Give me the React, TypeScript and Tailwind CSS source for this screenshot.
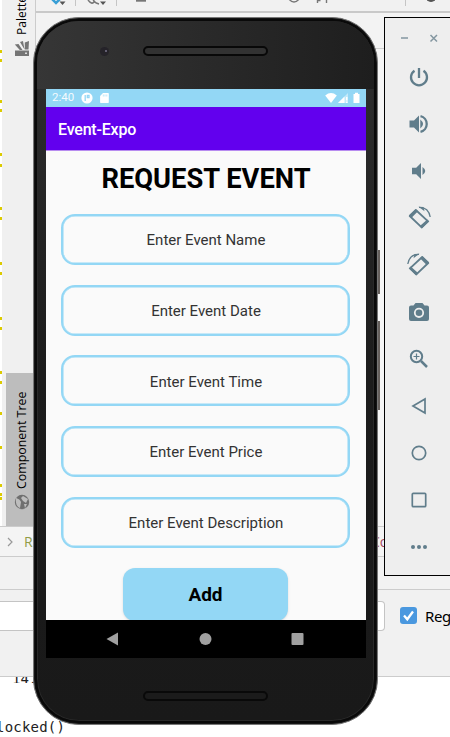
import React from "react";

const fields = [
  "Enter Event Name",
  "Enter Event Date",
  "Enter Event Time",
  "Enter Event Price",
  "Enter Event Description",
];

// Changed-line marks in the editor gutter.
const marks = [50, 59, 100, 109, 153, 164, 207, 217, 262, 272, 317, 327, 371, 381, 412, 446, 484, 493, 497];

function StatusBar() {
  return (
    <div className="flex h-[18px] items-center justify-between bg-[#93d7f5] pl-[6px] pr-[5px] text-white">
      <div className="flex items-center">
        <span className="w-[29px] text-[11.500px] leading-none opacity-90">2:40</span>
        <svg width="12" height="12" viewBox="0 0 12 12">
          <circle cx="6" cy="6" r="5.6" fill="#fff" />
          <path d="M4.200 3v6M6.300 3.500H8v2.200H6.300z" stroke="#93d7f5" strokeWidth="1.300" fill="none" />
        </svg>
        <svg className="ml-[7px]" width="9" height="12" viewBox="0 0 9 12">
          <path d="M3 1h5.200q.6 0 .6.7v8.600q0 .7-.7.7H.8q-.7 0-.7-.7V4z" fill="#fff" />
          <path d="M3.300 2.500v2M5 2.500v2M6.800 2.500v2" stroke="#93d7f5" strokeWidth=".6" />
        </svg>
      </div>
      <svg width="36" height="12" viewBox="0 0 36 12" fill="#fff">
        <path d="M.2 3.500Q6-1.300 11.800 3.500L6 11z" />
        <path d="M13 11 23 1v10z" opacity=".45" />
        <path d="M13 11 19.500 4.500V11zM21 5h1.500v3.500H21zM21 9.500h1.500V11H21z" />
        <path d="M28.500 2H30V.8h3V2h1.500v9h-6z" />
      </svg>
    </div>
  );
}

function Speaker({ dark }: { dark?: boolean }) {
  return (
    <div
      className={
        dark
          ? "h-[10px] w-[125px] rounded-full border-2 border-[#090909] bg-[#1b1b1b]"
          : "h-[10px] w-[125px] rounded-full border-2 border-[#080808] bg-[#323232]"
      }
    />
  );
}

function Phone() {
  return (
    <>
      <div className="absolute left-[377px] top-[250px] h-[44px] w-[3px] bg-[#66605d]" />
      <div className="absolute left-[377px] top-[321px] h-[89px] w-[3px] bg-[#66605d]" />
      <div className="absolute left-[33px] top-[17px] h-[708px] w-[345px] rounded-[46px] border border-[#777] bg-[#151515] p-px">
        <div className="flex h-full flex-col overflow-hidden rounded-[44px] border-2 border-[#090909] bg-linear-to-b from-[#303030] via-[#1c1c1c] to-[#191919] pl-[9px] pr-[8px] shadow-[inset_0_0_0_1px_#292929]">
          <div className="relative -ml-[9px] -mr-[8px] flex h-[68px] shrink-0 justify-center bg-linear-to-r from-[#363636] to-[#1e1e1e] pr-px pt-[25px]">
            <div className="absolute left-[63px] top-[26px] size-[9px] rounded-full bg-[#252329]">
              <div className="ml-[5px] mt-[3px] size-[2px] rounded-full bg-[#77738a]" />
            </div>
            <Speaker />
          </div>
          <div className="flex h-[569px] w-[320px] shrink-0 flex-col bg-[#fafafa] font-[Roboto,sans-serif]">
            <StatusBar />
            <div className="flex h-[44px] items-center border-b border-[#b88cf0] bg-[#6200ee] pl-[12px] pt-[2px] text-[16px] font-medium tracking-[-0.200px] text-white">
              Event-Expo
            </div>
            <div className="flex h-[469px] flex-col items-center overflow-hidden pr-[2px]">
              <h1 className="mt-[9px] h-[37px] pl-[2px] text-[27.300px] font-bold leading-[38px] text-black">REQUEST EVENT</h1>
              <div className="mt-[17px] flex flex-col gap-[19.700px]">
                {fields.map((f) => (
                  <div
                    key={f}
                    className="flex h-[51px] w-[289px] items-center justify-center rounded-[14px] border-2 border-[#93d7f5] pl-[2px] pt-[2px] text-[15px] text-[#333] shadow-[inset_0_0_0_0.500px_#93d7f5]"
                  >
                    {f}
                  </div>
                ))}
              </div>
              <div className="mt-[20px] flex h-[53px] w-[165px] shrink-0 items-center justify-center rounded-[12px] bg-[#93d7f5] pl-px pt-[2px] text-[19px] font-bold text-black shadow-sm">
                Add
              </div>
            </div>
            <div className="flex h-[38px] items-center justify-center bg-black">
              <svg width="200" height="16" viewBox="0 0 200 16" fill="#a0a0a0">
                <path d="M.5 8 12 1.500v13z" />
                <circle cx="99.500" cy="8" r="6" />
                <rect x="185.500" y="2" width="12" height="12" rx="1" />
              </svg>
            </div>
          </div>
          <div className="flex justify-center pr-[2px] pt-[33px]">
            <Speaker dark />
          </div>
        </div>
      </div>
    </>
  );
}

function Rotate({ flip }: { flip?: boolean }) {
  return (
    <g transform={flip ? "matrix(-1 0 0 1 24 0)" : undefined}>
      <path d="M8.800 4 20.800 15.200 14.700 21.300 2.700 10z" fill="none" stroke="#607d8b" strokeWidth="1.800" strokeLinejoin="round" />
      <path d="M8.800 3.200 11 5.300 4.800 11.600 1.800 9.500zM20.300 13.500l2 1.900-7.500 7-2.200-2.200z" fill="#607d8b" />
      <path d="M12 1.300Q21.500 1 23.200 11" fill="none" stroke="#607d8b" strokeWidth="1.300" />
      <path d="m11.500.7 5 .3 1 4.200z" fill="#607d8b" />
    </g>
  );
}

const tools: React.ReactNode[] = [
  <g fill="none" stroke="#607d8b" strokeWidth="2.300">
    <path d="M12 3v10M7.500 5.700a8 8 0 1 0 9 0" />
  </g>,
  <g fill="#607d8b">
    <path d="M2.500 8.500H7L12 3.500v17l-5-5H2.500zM13.300 7.500q5.500 4.500 0 9z" />
    <path d="M13.500 4.200a8 8 0 0 1 0 15.600" fill="none" stroke="#607d8b" strokeWidth="2.300" />
  </g>,
  <path d="M5 8.700h4.200L14 4v16l-4.800-4.700H5zM15.500 8q5.500 4 0 8z" fill="#607d8b" />,
  <Rotate />,
  <Rotate flip />,
  <g>
    <path d="M8.500 3h7l2 2.500H20a2 2 0 0 1 2 2V19a2 2 0 0 1-2 2H4a2 2 0 0 1-2-2V7.500a2 2 0 0 1 2-2h2.500z" fill="#607d8b" />
    <circle cx="12" cy="12.800" r="4.200" fill="none" stroke="#eee" strokeWidth="1.800" />
  </g>,
  <g fill="none" stroke="#607d8b">
    <circle cx="9.500" cy="9.500" r="5.700" strokeWidth="2" />
    <path d="m14 14 6 6" strokeWidth="2.500" />
    <path d="M9.500 6.500v6M6.500 9.500h6" strokeWidth="1.200" />
  </g>,
  <path d="M6 12 18 5v14z" fill="none" stroke="#607d8b" strokeWidth="1.700" />,
  <circle cx="12" cy="12" r="6.700" fill="none" stroke="#607d8b" strokeWidth="1.700" />,
  <rect x="5.300" y="5.300" width="13.400" height="13.400" rx="1" fill="none" stroke="#607d8b" strokeWidth="1.700" />,
  <g fill="#607d8b">
    <circle cx="6" cy="12" r="2" />
    <circle cx="12" cy="12" r="2" />
    <circle cx="18" cy="12" r="2" />
  </g>,
];

function EmulatorPanel() {
  return (
    <div className="absolute left-[384px] top-[17px] h-[559px] w-[80px] border border-black bg-[#eee]">
      <svg className="ml-[14px] mt-[14px]" width="40" height="12" viewBox="0 0 40 12" stroke="#8396a0" fill="none">
        <path d="M2 6h7" strokeWidth="1.500" />
        <path d="m31.500 3 6.500 6.500m0-6.500-6.500 6.500" strokeWidth="1.500" />
      </svg>
      <div className="ml-[22px] mt-[21px] flex flex-col gap-[23px]">
        {tools.map((t, i) => (
          <svg key={i} width="24" height="24" viewBox="0 0 24 24">
            {t}
          </svg>
        ))}
      </div>
    </div>
  );
}

function Ide() {
  return (
    <div className="flex h-full w-full flex-col bg-white font-['Open_Sans','Noto_Sans',sans-serif] text-[13px] text-[#222]">
      <div className="flex h-[526px] shrink-0">
        <svg className="shrink-0" width="2" height="526" viewBox="0 0 2 526">
          {marks.map((y) => (
            <rect key={y} x="0" y={y} width="2" height="3" fill="#dccb00" />
          ))}
        </svg>
        <div className="flex w-[34px] shrink-0 flex-col items-end border-r border-[#ccc] bg-[#f0f0f0]">
          <div className="flex h-[373px] w-[29px] flex-col items-center pl-[3px]">
            <div className="flex h-[35px] items-end">
              <span className="h-[35px] rotate-180 whitespace-nowrap text-[12px] leading-[18px] text-black [writing-mode:vertical-rl]">
                Palette
              </span>
            </div>
            <svg className="mt-[5px]" width="16" height="17" viewBox="0 0 16 17" fill="#757575">
              <path d="M1 10.500h14V16H1zM.8 4.500 4.500 4l4 6H5.800zM6 2l3-1 1.500 8.500zM10.800 9.500V2.500L15 1l-.5 8.500z" />
              <rect x="11" y="12.500" width="2" height="1.500" fill="#ddd" />
            </svg>
          </div>
          <div className="flex h-[153px] w-[29px] flex-col items-center bg-[#bdbdbd] pl-[3px] pt-[17px]">
            <span className="h-[99px] rotate-180 whitespace-nowrap text-[12.400px] leading-[18px] text-black [writing-mode:vertical-rl]">
              Component Tree
            </span>
            <svg className="mt-[5px]" width="16" height="16" viewBox="0 0 16 16">
              <circle cx="8" cy="8" r="7.200" fill="#6f6f6f" />
              <path d="M2 4q4 1 5 4l-1 6Q1 12 2 4M9 2l5 3-2 4-3-2-2-3zM10 10h3l-2 4z" fill="#bdbdbd" />
            </svg>
          </div>
        </div>
        <div className="flex flex-1 flex-col bg-[#f5f5f5]">
          <div className="h-[13px] border-b-2 border-[#c9c9c9] bg-[#f1f1f1]">
            <svg width="414" height="9" viewBox="0 0 414 9" fill="none">
              <path d="m14-3 6 6 5-5" stroke="#389fd6" strokeWidth="2.500" />
              <path d="M23.500 1.500h6l-3 3.500zM64 1.500h6l-3 3.500z" fill="#555" />
              <path d="M52 0q4 5 6 2m-1-3q1 4 6 5" stroke="#777" strokeWidth="1.500" />
              <path d="M39.500 0v6M80.500 0v6M369.500 0v6" stroke="#c5c5c5" />
              <path d="M100 0h10v1.700h-10z" fill="#777" />
              <path d="M252-2q6 8 12 0M281.500 0v3m9-3v3m-9-2.500h3" stroke="#777" strokeWidth="1.400" />
              <path d="M388-3q7 9 14 0z" fill="#555" stroke="#555" />
            </svg>
          </div>
          <div className="h-[36px] border-b border-[#d0d0d0] bg-[#f3f3f3]" />
        </div>
      </div>
      <div className="flex h-[31px] shrink-0 items-center justify-between border-y border-[#ccc] bg-[#f4f4f4] pl-[7px] text-[14px]">
        <div className="flex items-center">
          <svg width="7" height="10" viewBox="0 0 7 10">
            <path d="m1 1 4 4-4 4" fill="none" stroke="#999" strokeWidth="1.200" />
          </svg>
          <span className="ml-[10px] text-[#929c47]">R</span>
        </div>
        <span className="w-[79px] text-[#a64a61]">Co</span>
      </div>
      <div className="h-[33px] shrink-0 border-b border-[#ccc] bg-[#f2f2f2]" />
      <div className="flex h-[87px] shrink-0 border-b border-[#ccc] bg-[#f1f1f1] pt-[11px]">
        <div className="h-[30px] w-[385px] shrink-0 rounded-r-[4px] border border-l-0 border-[#c4c4c4] bg-white" />
        <div className="ml-[15px] flex h-[28px] items-center gap-[8px] whitespace-nowrap text-[15px] text-black">
          <div className="flex size-[17px] shrink-0 items-center justify-center rounded-[3px] bg-[#4a98df]">
            <svg width="13" height="13" viewBox="0 0 13 13">
              <path d="m2 6.500 3.300 3.800L11 2.500" fill="none" stroke="#fff" strokeWidth="2.300" />
            </svg>
          </div>
          <span className="pt-[2px] font-['Noto_Sans',sans-serif] tracking-[-0.400px]">Reg</span>
        </div>
      </div>
      <div className="flex h-[61px] flex-col overflow-hidden bg-white font-['DejaVu_Sans_Mono',monospace] text-[14px] text-[#222]">
        <div className="h-[8px] overflow-hidden pl-[12px]">
          <div className="-mt-[5px] leading-[14px]">14.</div>
        </div>
        <div className="-ml-[4px] mt-[34px] leading-[20px] tracking-[0.200px]">locked()</div>
      </div>
    </div>
  );
}

export default function App() {
  return (
    <div className="relative h-[737px] w-[450px] overflow-hidden">
      <Ide />
      <Phone />
      <EmulatorPanel />
    </div>
  );
}
